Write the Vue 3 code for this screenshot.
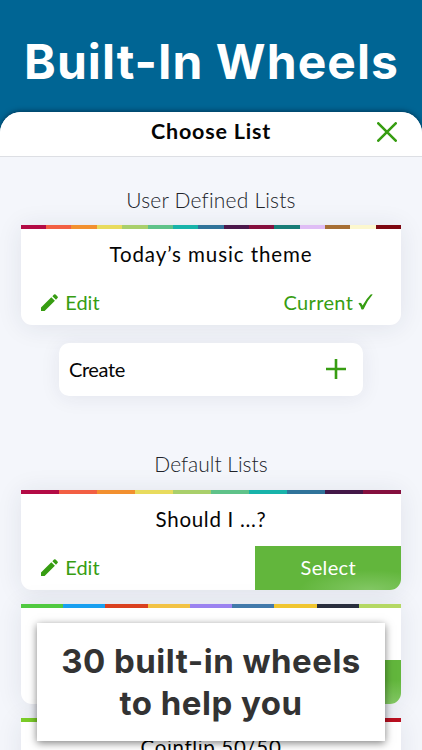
<script setup>
const userStripes = ['#b30b45', '#f25f43', '#f2902f', '#e8db5d', '#a9cf6b', '#5fc289', '#18b3aa', '#30739a', '#4b174b', '#850f3e', '#187c77', '#dfbdf5', '#a66e34', '#fcf7ce', '#7d0710']
const defaultLists = [
  { id: 'should', title: 'Should I ...?', stripes: ['#b30b45', '#f25f43', '#f2902f', '#e8db5d', '#a9cf6b', '#5fc289', '#18b3aa', '#30739a', '#431848', '#850f3e'] },
  { id: 'numbers', title: '', stripes: ['#50c940', '#189ff0', '#da401f', '#f2c244', '#9b82f0', '#4279aa', '#f0c52f', '#292e3d', '#b4d863'] },
  { id: 'coinflip', title: 'Coinflip 50/50', stripes: ['#7acb28', '#b90f20'] },
]
</script>

<template>
  <div class="screen">
    <h1 class="hero">Built-In Wheels</h1>
    <main class="sheet">
      <header class="bar">
        <h2>Choose List</h2>
        <svg class="close" viewBox="0 0 20 20"><path d="M1.3 1.3 18.7 18.7M18.7 1.3 1.3 18.7" /></svg>
      </header>

      <h3 class="section user"><span>User Defined Lists</span></h3>
      <article class="card">
        <div class="stripes"><i v-for="c in userStripes" :key="c" :style="{ background: c }" /></div>
        <p class="title theme">Today’s music theme</p>
        <div class="actions">
          <span class="edit">
            <svg viewBox="0 0 18 18"><path d="M0 17.5v-3.7L10.6 3.3l3.7 3.7L3.7 17.5zM11.7 2.2 13.4.6q.8-.8 1.6 0l2 2q.8.8 0 1.6l-1.6 1.7z" /></svg>
            <b>Edit</b>
          </span>
          <span class="current"><b>Current</b>
            <svg viewBox="0 0 15 16"><path d="M.4 9.6q1.2-1.4 2.9-.4l1.3 2.3Q8.5 4.6 12.6.6q1.2-.6 2.1 0Q9.2 6.7 5.7 15q-1.2 1-2.3.2Q2.5 11.7.4 9.6z" /></svg>
          </span>
        </div>
      </article>

      <div class="create">
        <span>Create</span>
        <svg viewBox="0 0 20 20"><path d="M10 0v20M0 10h20" /></svg>
      </div>

      <h3 class="section defaults"><span>Default Lists</span></h3>
      <article v-for="list in defaultLists" :key="list.id" class="card" :class="list.id">
        <div class="stripes"><i v-for="c in list.stripes" :key="c" :style="{ background: c }" /></div>
        <p class="title">{{ list.title }}</p>
        <div v-if="list.id !== 'coinflip'" class="actions">
          <span class="edit">
            <template v-if="list.title">
              <svg viewBox="0 0 18 18"><path d="M0 17.5v-3.7L10.6 3.3l3.7 3.7L3.7 17.5zM11.7 2.2 13.4.6q.8-.8 1.6 0l2 2q.8.8 0 1.6l-1.6 1.7z" /></svg>
              <b>Edit</b>
            </template>
          </span>
          <span class="select"><b v-if="list.title">Select</b></span>
        </div>
      </article>
    </main>
    <aside class="callout">30 built-in wheels<br />to help you</aside>
  </div>
</template>

<style>
html, body { margin: 0; overflow: hidden; }
</style>

<style scoped>
* { box-sizing: border-box; }
h1, h2, h3, p { margin: 0; }
b { font-weight: 400; }
.screen {
  position: relative;
  width: 422px;
  height: 750px;
  overflow: hidden;
  background: #006594;
  font-family: Lato, "Liberation Sans", sans-serif;
  color: #050505;
}
.hero {
  height: 112px;
  padding: 31px 0 0 1px;
  text-align: center;
  white-space: nowrap;
  font: 700 48px/62px Inter, sans-serif;
  letter-spacing: 1.05px;
  color: #fff;
}
.sheet {
  height: 780px;
  border-radius: 21px 21px 0 0;
  background: #f4f6fb;
  box-shadow: 0 -1px 5px rgba(0, 20, 40, .55);
  overflow: hidden;
}
.bar {
  display: grid;
  grid-template-columns: 46px 1fr 46px;
  height: 45px;
  background: #fff;
  border-bottom: 1px solid #dddfe4;
}
h2 {
  grid-column: 2;
  text-align: center;
  font-size: 21.5px;
  line-height: 39px;
  font-weight: 700;
  letter-spacing: .8px;
}
.close { width: 20px; height: 20px; margin: 10px 0 0 1px; }
.close path, .create path { fill: none; stroke: #379d12; stroke-width: 2.6; }
.close path { stroke-linecap: round; }
.section {
  text-align: center;
  font-size: 21px;
  line-height: 28px;
  font-weight: 300;
  letter-spacing: .2px;
  color: #20232a;
}
.user { padding: 29px 0 11.3px; }
.defaults { padding: 53.7px 0 12.3px; letter-spacing: 0; }
.card {
  display: flex;
  flex-direction: column;
  width: 380.5px;
  height: 100.2px;
  margin: 0 auto 13.7px;
  border-radius: 0 0 11px 11px;
  background: #fff;
  box-shadow: 0 2px 26px rgba(35, 40, 75, .095);
  overflow: hidden;
}
.stripes { display: flex; height: 3.8px; flex: none; }
.stripes i { flex: 1; }
.title {
  height: 52px;
  flex: none;
  text-align: center;
  font-size: 20.5px;
  line-height: 51px;
  letter-spacing: .7px;
}
.theme { letter-spacing: .92px; }
.coinflip .title { letter-spacing: .65px; line-height: 50px; }
.actions { display: flex; flex: 1; justify-content: space-between; color: #379d12; font-size: 20px; line-height: 43px; }
.edit { display: flex; align-items: center; padding-left: 20px; gap: 8px; }
.actions b { margin-top: -2px; }
.edit b { margin-left: -1px; }
.edit svg { width: 17.5px; height: 17.5px; margin-top: -2px; fill: currentColor; }
.current { display: flex; align-items: center; padding-right: 28px; gap: 5px; letter-spacing: .35px; }
.current svg { width: 15px; height: 16px; margin-top: -3px; fill: currentColor; }
.select {
  display: flex;
  justify-content: center;
  align-items: center;
  width: 146px;
  color: #fff;
  background: radial-gradient(ellipse 70px 20px at 78% 100%, #82c764, #62b63c);
  letter-spacing: .35px;
}
.numbers .select { background: linear-gradient(#62b63c 45%, #82c764); }
.create {
  display: flex;
  align-items: center;
  justify-content: space-between;
  width: 304px;
  height: 53.5px;
  margin: 17.3px auto 0;
  padding: 0 17px 1px 10px;
  border-radius: 10px;
  background: #fff;
  box-shadow: 0 2px 20px rgba(35, 40, 75, .08);
  font-size: 20px;
  letter-spacing: -.4px;
}
.create svg { width: 20px; height: 20px; }
.callout {
  position: absolute;
  left: 37px;
  top: 623px;
  width: 348px;
  height: 118px;
  padding-top: 17px;
  text-align: center;
  white-space: nowrap;
  font: 700 33px/42.3px Inter, sans-serif;
  letter-spacing: .5px;
  color: #333;
  background: #fff;
  box-shadow: 0 2px 8px rgba(0, 0, 0, .5);
}
</style>
